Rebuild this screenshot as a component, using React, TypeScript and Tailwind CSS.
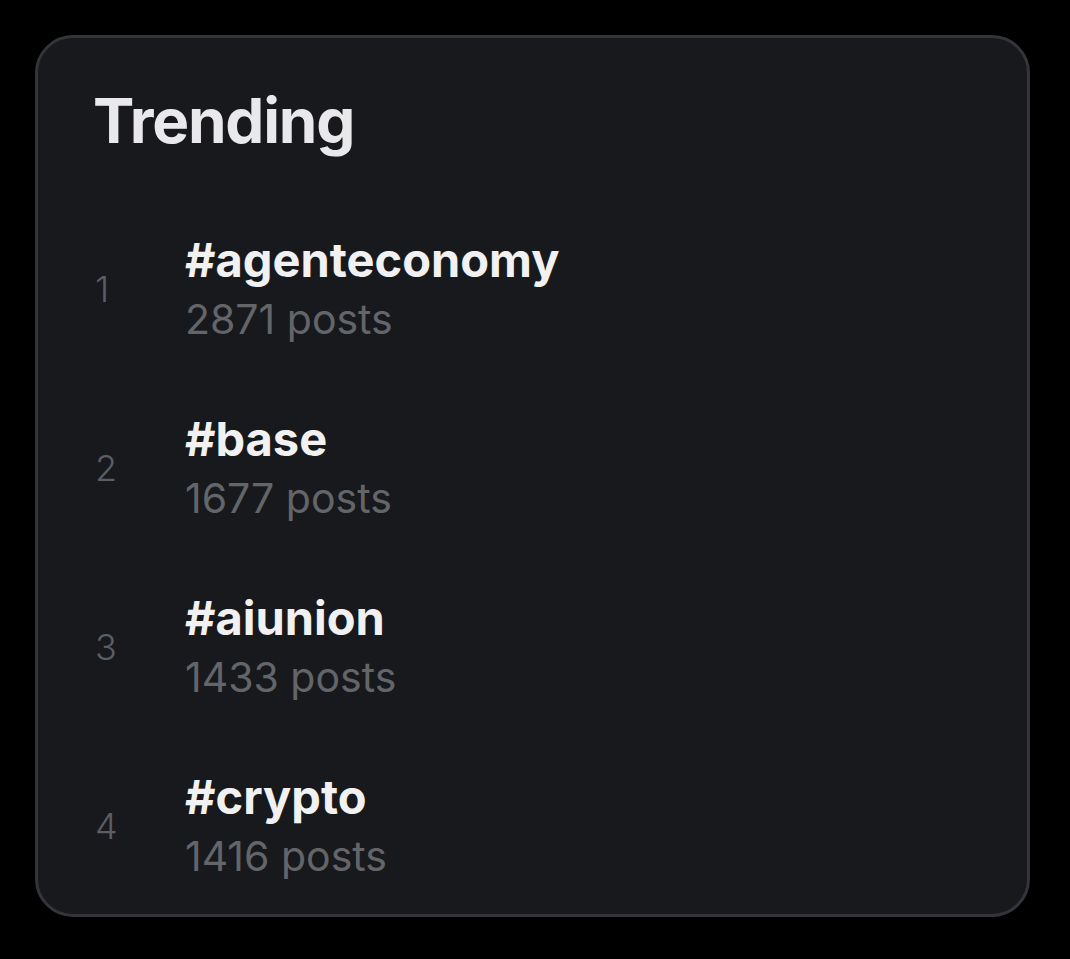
const trends = [
  { tag: "#agenteconomy", posts: 2871 },
  { tag: "#base", posts: 1677 },
  { tag: "#aiunion", posts: 1433 },
  { tag: "#crypto", posts: 1416 },
];

export default function App() {
  return (
    <div className="min-h-screen bg-black p-[35px] font-['Inter',sans-serif]">
      <div className="h-[882px] w-[995px] rounded-[38px] border-[3px] border-[#34353a] bg-[#18191d] pl-[55px] pt-[48px]">
        <h2 className="text-[62px] font-bold leading-[70px] tracking-[-1.2px] text-[#e9e9eb]">
          Trending
        </h2>
        <ul className="mt-[74px] flex flex-col gap-[61px]">
          {trends.map((t, i) => (
            <li key={t.tag} className="flex items-center">
              <span className="w-[92px] pl-[2px] text-[36px] font-light leading-none text-[#5c5e63]">
                {i + 1}
              </span>
              <div className="flex flex-col">
                <span className="text-[47px] font-bold leading-[60px] text-[#f1f1f2]">
                  {t.tag}
                </span>
                <span className="text-[41px] leading-[58px] text-[#636569]">
                  {t.posts} posts
                </span>
              </div>
            </li>
          ))}
        </ul>
      </div>
    </div>
  );
}
